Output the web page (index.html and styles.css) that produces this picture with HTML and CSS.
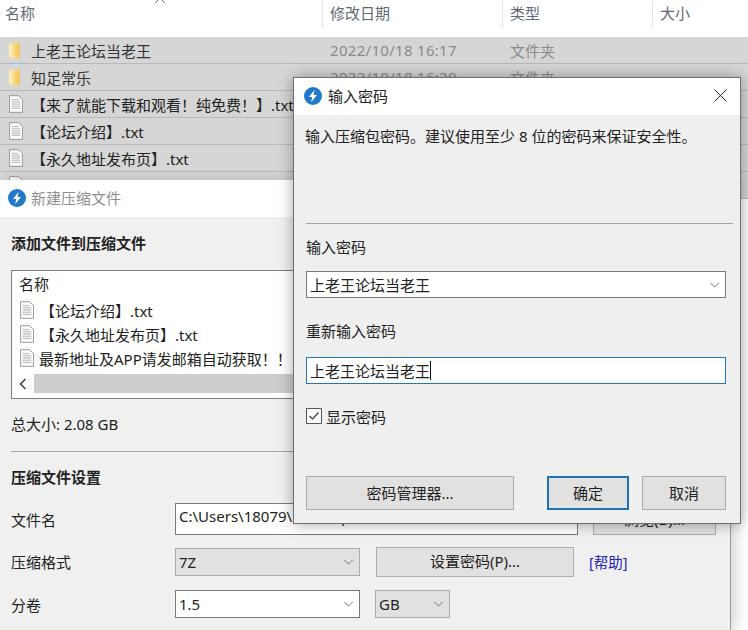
FILE: index.html
```html
<!DOCTYPE html>
<html lang="zh-CN">
<head>
    <meta charset="UTF-8">
    <title>输入密码</title>
    <link rel="stylesheet" href="styles.css">
</head>
<body>
    <svg class="defs" width="0" height="0">
        <symbol id="logo" viewBox="0 0 18 18">
            <circle cx="9" cy="9" r="9" fill="#1f78c8"/>
            <path d="M10.6 2.8 5 9.9h3.2l-1 5.3 5.8-7.3H9.6z" fill="#fff"/>
        </symbol>
        <symbol id="txt" viewBox="0 0 16 20">
            <path d="M.5.5h10.5l4.5 4.5v14.5H.5z" fill="#fbfbfb" stroke="#8d8d8d"/>
            <path d="M3 5h8M3 7.5h10M3 10h10M3 12.5h10M3 15h10" stroke="#a9a9a9" fill="none"/>
        </symbol>
        <symbol id="chev" viewBox="0 0 12 7">
            <path d="M1 1l5 5 5-5" fill="none" stroke="#666" stroke-width="1"/>
        </symbol>
    </svg>

    <!-- file list behind the windows -->
    <section class="explorer">
        <div class="head">
            <svg class="sort" width="10" height="5" viewBox="0 0 10 5"><path d="M0 5l5-5 5 5" fill="none" stroke="#777"/></svg>
            <span class="col-name">名称</span>
            <span class="col-date">修改日期</span>
            <span class="col-type">类型</span>
            <span class="col-size">大小</span>
        </div>
        <div class="row"><span class="col-name"><i class="folder"></i><span class="gap-a">上老王论坛当老王</span></span><span class="col-date">2022/10/18 16:17</span><span class="col-type">文件夹</span></div>
        <div class="row"><span class="col-name"><i class="folder"></i><span class="gap-a">知足常乐</span></span><span class="col-date">2022/10/18 16:20</span><span class="col-type">文件夹</span></div>
        <div class="row"><span class="col-name"><svg class="ico"><use href="#txt"/></svg><span class="black">【来了就能下载和观看！纯免费！】.txt</span></span><span class="col-date">2022/10/18 16:20</span><span class="col-type">文本文档</span><span class="col-size">3 KB</span></div>
        <div class="row"><span class="col-name"><svg class="ico"><use href="#txt"/></svg><span class="black">【论坛介绍】.txt</span></span><span class="col-date">2022/10/18 16:20</span><span class="col-type">文本文档</span><span class="col-size">3 KB</span></div>
        <div class="row"><span class="col-name"><svg class="ico"><use href="#txt"/></svg><span class="black">【永久地址发布页】.txt</span></span><span class="col-date">2022/10/18 16:20</span><span class="col-type">文本文档</span><span class="col-size">3 KB</span></div>
        <div class="row"><span class="col-name"><svg class="ico"><use href="#txt"/></svg></span></div>
    </section>

    <!-- new archive window -->
    <section class="win archive">
        <header class="titlebar dim">
            <svg class="logo"><use href="#logo"/></svg>
            <span>新建压缩文件</span>
        </header>
        <div class="archive-body">
            <h2 class="first">添加文件到压缩文件</h2>
            <div class="filebox">
                <div class="filebox-head">名称</div>
                <div class="filebox-row"><svg class="ico"><use href="#txt"/></svg><span class="indent">【论坛介绍】.txt</span></div>
                <div class="filebox-row"><svg class="ico"><use href="#txt"/></svg><span class="indent">【永久地址发布页】.txt</span></div>
                <div class="filebox-row"><svg class="ico"><use href="#txt"/></svg><span class="plain">最新地址及APP请发邮箱自动获取！！</span></div>
                <div class="hscroll">
                    <svg class="arrow" width="8" height="12" viewBox="0 0 8 12"><path d="M6.5 1 1.5 6l5 5" fill="none" stroke="#444" stroke-width="1.6"/></svg>
                    <span class="thumb"></span>
                </div>
            </div>
            <p class="total">总大小: 2.08 GB</p>
            <hr class="rule">
            <h2>压缩文件设置</h2>
            <div class="form-row r1">
                <label>文件名</label>
                <div class="field path">C:\Users\18079\Desktop\【上老王论坛当老王】.7z</div>
                <button class="btn browse">浏览(B)...</button>
            </div>
            <div class="form-row r2">
                <label>压缩格式</label>
                <div class="field select disabled">7Z<svg class="chev"><use href="#chev"/></svg></div>
                <button class="btn setpw">设置密码(P)...</button>
                <a class="help">[帮助]</a>
            </div>
            <div class="form-row r3">
                <label>分卷</label>
                <div class="field select">1.5<svg class="chev"><use href="#chev"/></svg></div>
                <div class="field select unit disabled">GB<svg class="chev"><use href="#chev"/></svg></div>
            </div>
        </div>
    </section>

    <!-- password dialog -->
    <section class="win dialog">
        <header class="titlebar">
            <svg class="logo"><use href="#logo"/></svg>
            <span>输入密码</span>
            <svg class="close" width="13" height="13" viewBox="0 0 13 13"><path d="M.5.5l12 12M12.5.5l-12 12" stroke="#222" fill="none"/></svg>
        </header>
        <div class="dialog-body">
            <p class="hint">输入压缩包密码。建议使用至少 8 位的密码来保证安全性。</p>
            <hr class="rule">
            <label class="lbl">输入密码</label>
            <div class="field select pw">上老王论坛当老王<svg class="chev"><use href="#chev"/></svg></div>
            <label class="lbl second">重新输入密码</label>
            <div class="field pw focus">上老王论坛当老王<span class="caret"></span></div>
            <div class="check">
                <svg class="box" width="16" height="16" viewBox="0 0 16 16"><path d="M.5.5h15v15H.5z" fill="#fff" stroke="#555"/><path d="M3.5 8l3 3 6-6.5" fill="none" stroke="#333" stroke-width="1.2"/></svg>
                <span>显示密码</span>
            </div>
            <div class="actions">
                <button class="btn manager">密码管理器...</button>
                <button class="btn ok">确定</button>
                <button class="btn cancel">取消</button>
            </div>
        </div>
    </section>
</body>
</html>
```

FILE: styles.css
```css
* {
    box-sizing: border-box;
}

html, body {
    margin: 0;
    height: 100%;
}

body {
    position: relative;
    width: 748px;
    height: 630px;
    overflow: hidden;
    background: #fff;
    color: #222;
    font-family: "Noto Sans", "Noto Sans CJK SC", sans-serif;
    font-size: 15px;
}

.defs {
    position: absolute;
}

/* explorer */
.head, .row {
    display: grid;
    grid-template-columns: 330px 180px 150px 1fr;
    align-items: center;
}

.head {
    position: relative;
    height: 37px;
    color: #5f6975;
    padding-bottom: 13px;
}

.head .col-name {
    padding-left: 5px;
}

.head .col-date, .head .col-type, .head .col-size {
    position: relative;
}

.head .col-date::before, .head .col-type::before, .head .col-size::before {
    content: "";
    position: absolute;
    left: -8px;
    top: -8px;
    bottom: -5px;
    border-left: 1px solid #e4e4e4;
}

.sort {
    position: absolute;
    left: 155px;
    top: -2px;
}

.row {
    height: 27px;
    background: #d6d6d6;
    border-bottom: 1px solid #b9b9b9;
    color: #8a8a8a;
    white-space: nowrap;
}

.row .col-date {
    letter-spacing: 0.3px;
}

.row .col-name {
    display: flex;
    align-items: center;
    color: #333;
    overflow: hidden;
    padding-left: 9px;
}

.row .black {
    color: #222;
    margin-left: 8px;
}

.gap-a {
    margin-left: 11px;
}

.row .col-size {
    color: #666;
    padding-left: 50px;
}

.folder {
    width: 11px;
    height: 15px;
    flex: none;
    background: linear-gradient(90deg, #fff3c4, #f6cf6d 70%, #f2c75c);
    border-radius: 2px 0 0 2px;
}

.ico {
    width: 14px;
    height: 18px;
    flex: none;
}

/* windows */
.win {
    position: absolute;
}

.archive {
    left: 0;
    top: 180px;
    width: 731px;
    height: 450px;
    background: #f0f0f0;
    border-right: 1px solid #9a9a9a;
    box-shadow: 6px 0 12px rgba(0, 0, 0, 0.15);
}

.dialog {
    left: 293px;
    top: 77px;
    width: 448px;
    height: 447px;
    background: #efefef;
    border: 1px solid #6e6e6e;
    box-shadow: 0 0 14px rgba(0, 0, 0, 0.35);
}

.titlebar {
    display: flex;
    align-items: center;
    height: 37px;
    background: #fff;
    padding-left: 8px;
    padding-bottom: 2px;
    gap: 5px;
}

.dialog .titlebar {
    padding-left: 10px;
    gap: 6px;
}

.titlebar.dim {
    color: #8f8f8f;
}

.logo {
    width: 18px;
    height: 18px;
    flex: none;
}

.close {
    margin-left: auto;
    margin-right: 13px;
}

/* archive form */
.archive-body {
    padding: 0 0 0 11px;
}

h2 {
    margin: 0;
    font-size: 15px;
    font-weight: 700;
    line-height: 20px;
}

h2.first {
    padding-top: 16px;
}

.filebox {
    width: 340px;
    height: 129px;
    margin-top: 17px;
    background: #fff;
    border: 1px solid #7d7d7d;
}

.filebox-head {
    height: 27px;
    line-height: 27px;
    padding-left: 7px;
}

.filebox-row {
    display: flex;
    align-items: center;
    height: 24px;
    padding-left: 8px;
    gap: 2px;
    white-space: nowrap;
}

.indent {
    margin-left: 4px;
}

.plain {
    margin-left: 3px;
}

.hscroll {
    display: flex;
    align-items: center;
    height: 19px;
    margin-top: 4px;
    padding-left: 7px;
    gap: 7px;
}

.thumb {
    flex: 1;
    height: 19px;
    background: #cdcdcd;
}

.total {
    margin: 15px 0 0;
    line-height: 20px;
}

.rule {
    border: 0;
    border-top: 1px solid #a4a4a4;
    margin: 0;
}

.archive .rule {
    margin-top: 17px;
    margin-bottom: 15px;
    width: 340px;
}

.form-row {
    display: flex;
    align-items: center;
}

.form-row label {
    width: 164px;
    flex: none;
}

.r1 {
    margin-top: 16px;
    height: 32px;
}

.r2 {
    margin-top: 11px;
    height: 31px;
}

.r3 {
    margin-top: 13px;
    height: 28px;
}

.field {
    display: flex;
    align-items: center;
    background: #fff;
    border: 1px solid #7a7a7a;
    padding-left: 3px;
    white-space: nowrap;
    overflow: hidden;
    color: #222;
}

.field.path {
    width: 403px;
    height: 32px;
    align-items: flex-start;
    padding-top: 1px;
}

.form-row .select {
    width: 185px;
    height: 28px;
}

.form-row .unit {
    width: 75px;
    margin-left: 15px;
}

.disabled {
    background: #e1e1e1;
    border-color: #adadad;
}

.chev {
    width: 11px;
    height: 6px;
    margin-left: auto;
    margin-right: 5px;
    flex: none;
}

.btn {
    font: inherit;
    color: #222;
    background: #e1e1e1;
    border: 1px solid #adadad;
    padding: 0 0 2px;
}

.browse {
    width: 123px;
    height: 31px;
    margin-left: 15px;
}

.setpw {
    width: 198px;
    height: 30px;
    margin-left: 16px;
}

.help {
    margin-left: 15px;
    color: #2323b4;
    font-size: 14.5px;
}

/* password dialog */
.dialog-body {
    padding: 0 14px 0 12px;
}

.hint {
    margin: 11px 0 0;
    line-height: 20px;
    color: #222;
    margin-left: -1px;
}

.dialog .rule {
    margin: 77px 0 0 0;
    width: 427px;
}

.lbl {
    display: block;
    line-height: 20px;
    margin-top: 13px;
}

.lbl.second {
    margin-top: 23px;
}

.pw {
    width: 420px;
    height: 27px;
}

.dialog-body .pw {
    margin-top: 14px;
}

.dialog-body .lbl.second + .pw {
    margin-top: 16px;
}

.focus {
    border-color: #1f78b4;
}

.caret {
    width: 1px;
    height: 19px;
    background: #111;
}

.check {
    display: flex;
    align-items: center;
    gap: 4px;
    height: 20px;
    margin-top: 22px;
}

.box {
    flex: none;
}

.actions {
    display: flex;
    margin-top: 50px;
}

.actions .btn {
    height: 34px;
}

.manager {
    width: 208px;
}

.ok {
    width: 82px;
    margin-left: 33px;
    border: 2px solid #1f72b4;
}

.cancel {
    width: 84px;
    margin-left: 13px;
}
```
